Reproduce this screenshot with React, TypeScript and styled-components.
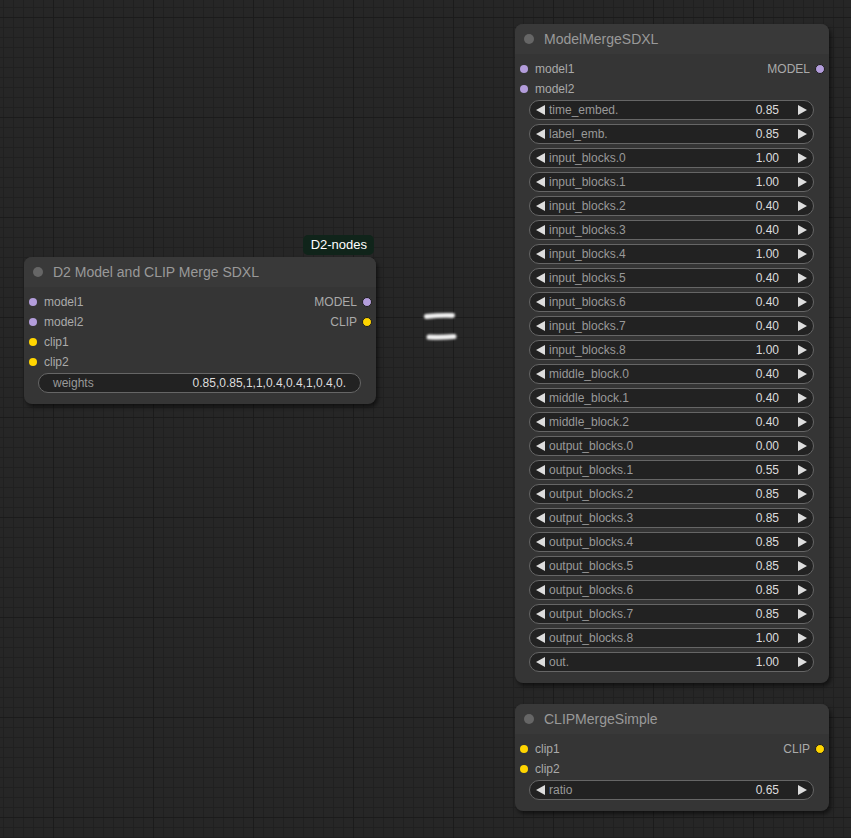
import styled, { createGlobalStyle } from "styled-components";

const GlobalStyle = createGlobalStyle`
  html, body {
    margin: 0;
    padding: 0;
    background: #262626;
  }
  body {
    font-family: "Liberation Sans", Arial, sans-serif;
  }
`;

const SLOT_COLORS: Record<string, string> = {
  MODEL: "#b39ddb",
  CLIP: "#ffd500",
};

// Canvas
const Canvas = styled.div`
  position: relative;
  width: 851px;
  height: 838px;
  overflow: hidden;
  background-color: #262626;
  background-image: linear-gradient(#1b1b1b 1px, transparent 1px),
    linear-gradient(90deg, #1b1b1b 1px, transparent 1px),
    linear-gradient(#202020 1px, transparent 1px),
    linear-gradient(90deg, #202020 1px, transparent 1px);
  background-size: 100px 100px, 100px 100px, 10px 10px, 10px 10px;
  background-position: 0 17px, 53px 0, 0 7px, 3px 0;
`;

// Node
const NodeBox = styled.div<{ $x: number; $y: number; $w: number }>`
  position: absolute;
  left: ${(p) => p.$x}px;
  top: ${(p) => p.$y}px;
  width: ${(p) => p.$w}px;
  background: #353535;
  border-radius: 8px;
  box-shadow: 2px 3px 4px rgba(0, 0, 0, 0.55);
`;

const TitleBar = styled.div`
  height: 30px;
  display: flex;
  align-items: center;
  gap: 10px;
  padding-left: 9px;
  background: #393939;
  border-radius: 8px 8px 0 0;
  color: #999;
  font-size: 14px;
`;

const TitleDot = styled.span`
  width: 10px;
  height: 10px;
  border-radius: 50%;
  background: #666;
`;

const Badge = styled.div`
  position: absolute;
  right: 2px;
  bottom: calc(100% + 2px);
  height: 20px;
  line-height: 20px;
  padding: 0 7px 0 8px;
  border-radius: 5px;
  background: #10241a;
  color: #fff;
  font-size: 13px;
`;

const Body = styled.div`
  padding: 5px 0 11px;
  display: flex;
  flex-direction: column;
`;

const SlotRow = styled.div`
  height: 20px;
  display: flex;
  align-items: center;
  justify-content: space-between;
  font-size: 12px;
  color: #aaa;
`;

const Slot = styled.div<{ $out?: boolean }>`
  display: flex;
  align-items: center;
  flex-direction: ${(p) => (p.$out ? "row-reverse" : "row")};
  gap: ${(p) => (p.$out ? 5 : 7)}px;
  padding: 0 ${(p) => (p.$out ? 4 : 5)}px;
`;

const SlotDot = styled.span<{ $color: string; $out?: boolean }>`
  width: ${(p) => (p.$out ? 10 : 8)}px;
  height: ${(p) => (p.$out ? 10 : 8)}px;
  box-sizing: border-box;
  border-radius: 50%;
  background: ${(p) => p.$color};
  border: ${(p) => (p.$out ? "1.5px solid #1c1c1c" : "none")};
`;

const Widgets = styled.div`
  display: flex;
  flex-direction: column;
  gap: 4px;
  margin-top: 1px;
  padding: 0 15px 0 14px;
`;

const Widget = styled.div`
  height: 20px;
  box-sizing: border-box;
  border: 1px solid #666;
  border-radius: 10px;
  background: #222;
  display: flex;
  align-items: center;
  font-size: 12px;
`;

const Arrow = styled.span<{ $dir: "left" | "right" }>`
  width: 0;
  height: 0;
  border-top: 5px solid transparent;
  border-bottom: 5px solid transparent;
  ${(p) =>
    p.$dir === "left"
      ? "border-right: 9px solid #ddd; margin-left: 6px;"
      : "border-left: 9px solid #ddd; margin-right: 6px; margin-left: 19px;"}
`;

const WidgetLabel = styled.span<{ $text?: boolean }>`
  color: #999;
  margin-left: ${(p) => (p.$text ? 14 : 4)}px;
  white-space: nowrap;
`;

const WidgetValue = styled.span<{ $text?: boolean }>`
  color: #ddd;
  margin-left: auto;
  margin-right: ${(p) => (p.$text ? 14 : 0)}px;
  white-space: nowrap;
`;

const Scribble = styled.svg`
  position: absolute;
  left: 416px;
  top: 304px;
`;

type SlotDef = { name: string; type: string };
type WidgetDef = { name: string; value: string; kind: "number" | "text" };

type NodeDef = {
  title: string;
  x: number;
  y: number;
  w: number;
  badge?: string;
  inputs: SlotDef[];
  outputs: SlotDef[];
  widgets: WidgetDef[];
};

const blockValues: [string, string][] = [
  ["time_embed.", "0.85"],
  ["label_emb.", "0.85"],
  ["input_blocks.0", "1.00"],
  ["input_blocks.1", "1.00"],
  ["input_blocks.2", "0.40"],
  ["input_blocks.3", "0.40"],
  ["input_blocks.4", "1.00"],
  ["input_blocks.5", "0.40"],
  ["input_blocks.6", "0.40"],
  ["input_blocks.7", "0.40"],
  ["input_blocks.8", "1.00"],
  ["middle_block.0", "0.40"],
  ["middle_block.1", "0.40"],
  ["middle_block.2", "0.40"],
  ["output_blocks.0", "0.00"],
  ["output_blocks.1", "0.55"],
  ["output_blocks.2", "0.85"],
  ["output_blocks.3", "0.85"],
  ["output_blocks.4", "0.85"],
  ["output_blocks.5", "0.85"],
  ["output_blocks.6", "0.85"],
  ["output_blocks.7", "0.85"],
  ["output_blocks.8", "1.00"],
  ["out.", "1.00"],
];

const nodes: NodeDef[] = [
  {
    title: "D2 Model and CLIP Merge SDXL",
    x: 24,
    y: 257,
    w: 352,
    badge: "D2-nodes",
    inputs: [
      { name: "model1", type: "MODEL" },
      { name: "model2", type: "MODEL" },
      { name: "clip1", type: "CLIP" },
      { name: "clip2", type: "CLIP" },
    ],
    outputs: [
      { name: "MODEL", type: "MODEL" },
      { name: "CLIP", type: "CLIP" },
    ],
    widgets: [
      { name: "weights", value: "0.85,0.85,1,1,0.4,0.4,1,0.4,0.", kind: "text" },
    ],
  },
  {
    title: "ModelMergeSDXL",
    x: 515,
    y: 24,
    w: 314,
    inputs: [
      { name: "model1", type: "MODEL" },
      { name: "model2", type: "MODEL" },
    ],
    outputs: [{ name: "MODEL", type: "MODEL" }],
    widgets: blockValues.map(([name, value]) => ({ name, value, kind: "number" })),
  },
  {
    title: "CLIPMergeSimple",
    x: 515,
    y: 704,
    w: 314,
    inputs: [
      { name: "clip1", type: "CLIP" },
      { name: "clip2", type: "CLIP" },
    ],
    outputs: [{ name: "CLIP", type: "CLIP" }],
    widgets: [{ name: "ratio", value: "0.65", kind: "number" }],
  },
];

function GraphNode({ node }: { node: NodeDef }) {
  const rows = Math.max(node.inputs.length, node.outputs.length);

  return (
    <NodeBox $x={node.x} $y={node.y} $w={node.w}>
      {node.badge && <Badge>{node.badge}</Badge>}
      <TitleBar>
        <TitleDot />
        <span>{node.title}</span>
      </TitleBar>
      <Body>
        {Array.from({ length: rows }).map((_, i) => {
          const input = node.inputs[i];
          const output = node.outputs[i];
          return (
            <SlotRow key={i}>
              {input ? (
                <Slot>
                  <SlotDot $color={SLOT_COLORS[input.type]} />
                  <span>{input.name}</span>
                </Slot>
              ) : (
                <span />
              )}
              {output && (
                <Slot $out>
                  <SlotDot $out $color={SLOT_COLORS[output.type]} />
                  <span>{output.name}</span>
                </Slot>
              )}
            </SlotRow>
          );
        })}
        <Widgets>
          {node.widgets.map((w) =>
            w.kind === "number" ? (
              <Widget key={w.name}>
                <Arrow $dir="left" />
                <WidgetLabel>{w.name}</WidgetLabel>
                <WidgetValue>{w.value}</WidgetValue>
                <Arrow $dir="right" />
              </Widget>
            ) : (
              <Widget key={w.name}>
                <WidgetLabel $text>{w.name}</WidgetLabel>
                <WidgetValue $text>{w.value}</WidgetValue>
              </Widget>
            )
          )}
        </Widgets>
      </Body>
    </NodeBox>
  );
}

export default function App() {
  return (
    <>
      <GlobalStyle />
      <Canvas>
        {nodes.map((n) => (
          <GraphNode key={n.title} node={n} />
        ))}
        {/* hand-drawn "=" between the node groups */}
        <Scribble width="48" height="42" viewBox="0 0 48 42">
          <defs>
            <filter id="soft" x="-20%" y="-50%" width="140%" height="200%">
              <feGaussianBlur stdDeviation="0.9" />
            </filter>
          </defs>
          <g
            stroke="#f2f2f2"
            strokeWidth="5"
            strokeLinecap="round"
            fill="none"
            filter="url(#soft)"
          >
            <path d="M10.5 12.5 Q24 11 36.5 11.5" />
            <path d="M13 33 Q26 33.5 38 32.5" />
          </g>
        </Scribble>
      </Canvas>
    </>
  );
}
